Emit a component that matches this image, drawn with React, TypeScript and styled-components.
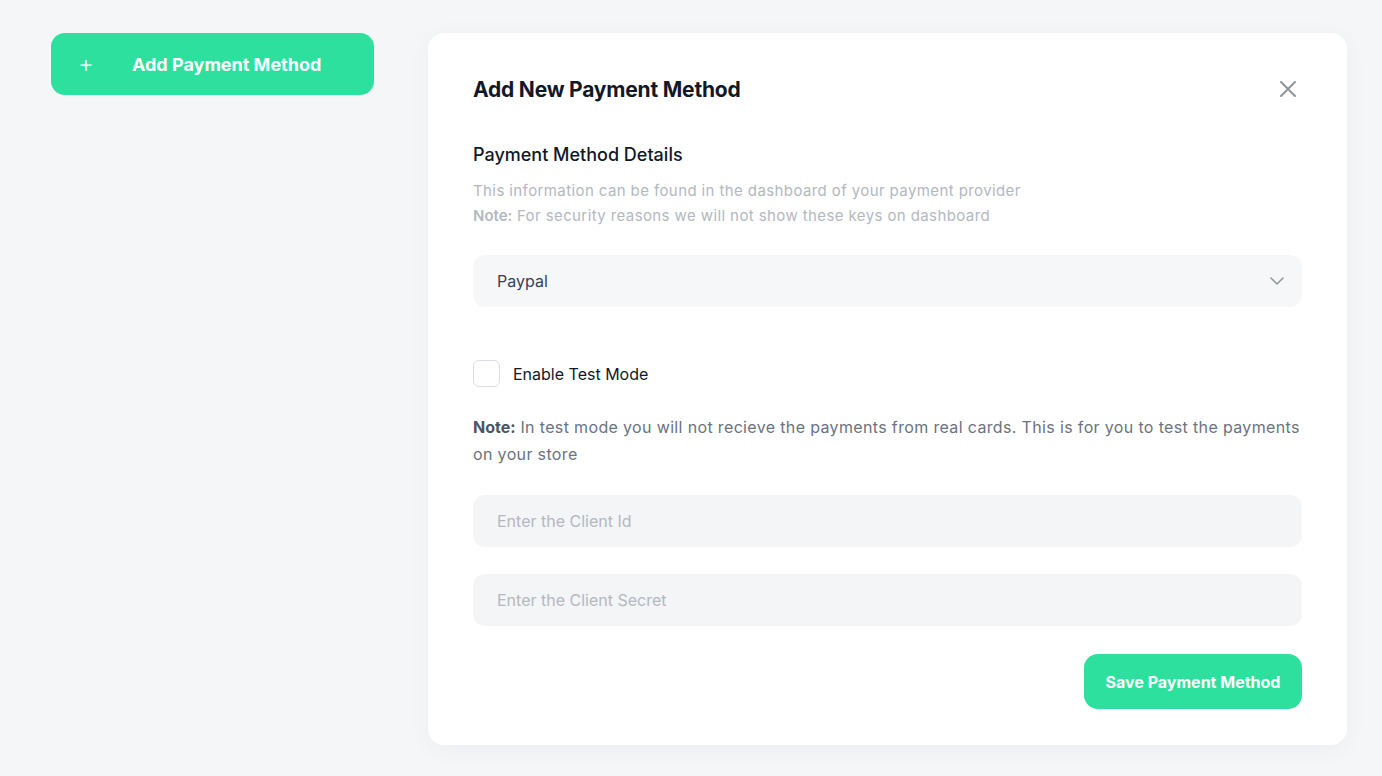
import { useState } from 'react';
import styled, { createGlobalStyle } from 'styled-components';

const GlobalStyle = createGlobalStyle`
  html, body {
    margin: 0;
    padding: 0;
    background: #f5f6f8;
    font-family: 'Inter', 'Noto Sans', sans-serif;
  }
  * {
    box-sizing: border-box;
  }
`;

const App = () => {
  const [testMode, setTestMode] = useState(false);

  return (
    <Page>
      <GlobalStyle />
      <Sidebar>
        <AddButton>
          <PlusIcon>+</PlusIcon>
          Add Payment Method
        </AddButton>
      </Sidebar>
      <Card>
        <CardHeader>
          <Title>Add New Payment Method</Title>
          <CloseButton aria-label="close">
            <svg width="18" height="18" viewBox="0 0 18 18" fill="none">
              <path d="M2 2L16 16M16 2L2 16" stroke="#8f949c" strokeWidth="2" strokeLinecap="round" />
            </svg>
          </CloseButton>
        </CardHeader>

        <SectionTitle>Payment Method Details</SectionTitle>
        <HelpText>
          This information can be found in the dashboard of your payment provider
          <br />
          <b>Note:</b> For security reasons we will not show these keys on dashboard
        </HelpText>

        <SelectBox>
          <span>Paypal</span>
          <svg width="14" height="8" viewBox="0 0 14 8" fill="none">
            <path d="M1 1L7 7L13 1" stroke="#8f949c" strokeWidth="1.5" strokeLinecap="round" strokeLinejoin="round" />
          </svg>
        </SelectBox>

        <CheckRow onClick={() => setTestMode(v => !v)}>
          <CheckBox checked={testMode} />
          <CheckLabel>Enable Test Mode</CheckLabel>
        </CheckRow>

        <NoteText>
          <b>Note:</b> In test mode you will not recieve the payments from real cards. This is for you to test the payments
          on your store
        </NoteText>

        <Field placeholder="Enter the Client Id" />
        <Field placeholder="Enter the Client Secret" />

        <Footer>
          <SaveButton>Save Payment Method</SaveButton>
        </Footer>
      </Card>
    </Page>
  );
};

const Page = styled.div`
  display: flex;
  align-items: flex-start;
  gap: 54px;
  padding: 33px 35px 31px 51px;
  min-height: 776px;
`;

const Sidebar = styled.div`
  width: 323px;
  flex-shrink: 0;
`;

const AddButton = styled.button`
  width: 100%;
  height: 62px;
  border: none;
  border-radius: 14px;
  background: #2de09d;
  color: #ffffff;
  font-family: inherit;
  font-size: 18px;
  font-weight: 700;
  display: flex;
  align-items: center;
  padding: 0 0 0 27px;
  cursor: pointer;
`;

const PlusIcon = styled.span`
  font-size: 24px;
  font-weight: 300;
  width: 54px;
  text-align: left;
  margin-top: -2px;
`;

const Card = styled.div`
  flex: 1;
  background: #ffffff;
  border-radius: 16px;
  padding: 40px 45px 36px 45px;
  box-shadow: 0 4px 24px rgba(20, 30, 50, 0.04);
  display: flex;
  flex-direction: column;
`;

const CardHeader = styled.div`
  display: flex;
  align-items: center;
  justify-content: space-between;
  height: 32px;
`;

const Title = styled.h2`
  margin: 0;
  font-size: 21px;
  font-weight: 700;
  color: #111827;
  letter-spacing: -0.2px;
`;

const CloseButton = styled.button`
  border: none;
  background: none;
  padding: 0;
  margin-right: 5px;
  display: flex;
  cursor: pointer;
`;

const SectionTitle = styled.h3`
  margin: 37px 0 0 0;
  font-size: 18px;
  font-weight: 500;
  color: #111827;
  line-height: 26px;
`;

const HelpText = styled.p`
  margin: 10px 0 0 0;
  font-size: 15px;
  line-height: 25px;
  color: #b3b8c0;
  letter-spacing: 0.4px;

  b {
    font-weight: 600;
    letter-spacing: 0;
  }
`;

const SelectBox = styled.div`
  margin-top: 27px;
  height: 52px;
  border-radius: 12px;
  background: #f6f7f9;
  display: flex;
  align-items: center;
  justify-content: space-between;
  padding: 0 18px 0 24px;
  font-size: 16px;
  color: #374151;
  cursor: pointer;
`;

const CheckRow = styled.label`
  margin-top: 53px;
  display: flex;
  align-items: center;
  gap: 13px;
  cursor: pointer;
`;

const CheckBox = styled.span<{ checked?: boolean }>`
  width: 27px;
  height: 27px;
  border-radius: 6px;
  border: 1.5px solid #dadde2;
  background: ${({ checked }) => (checked ? '#2de09d' : '#ffffff')};
`;

const CheckLabel = styled.span`
  font-size: 16px;
  color: #111827;
`;

const NoteText = styled.p`
  margin: 27px 0 0 0;
  font-size: 16px;
  line-height: 27px;
  color: #6b7280;
  letter-spacing: 0.35px;

  b {
    color: #4b5563;
    font-weight: 700;
    letter-spacing: 0;
  }
`;

const Field = styled.input`
  margin-top: 27px;
  height: 52px;
  border: none;
  border-radius: 12px;
  background: #f4f5f7;
  padding: 0 24px;
  font-family: inherit;
  font-size: 16px;
  color: #374151;
  outline: none;

  &::placeholder {
    color: #b3b8c0;
  }
`;

const Footer = styled.div`
  display: flex;
  justify-content: flex-end;
  margin-top: 28px;
`;

const SaveButton = styled.button`
  width: 218px;
  height: 55px;
  border: none;
  border-radius: 14px;
  background: #2de09d;
  color: #ffffff;
  font-family: inherit;
  font-size: 16px;
  font-weight: 700;
  cursor: pointer;
`;

export default App;
